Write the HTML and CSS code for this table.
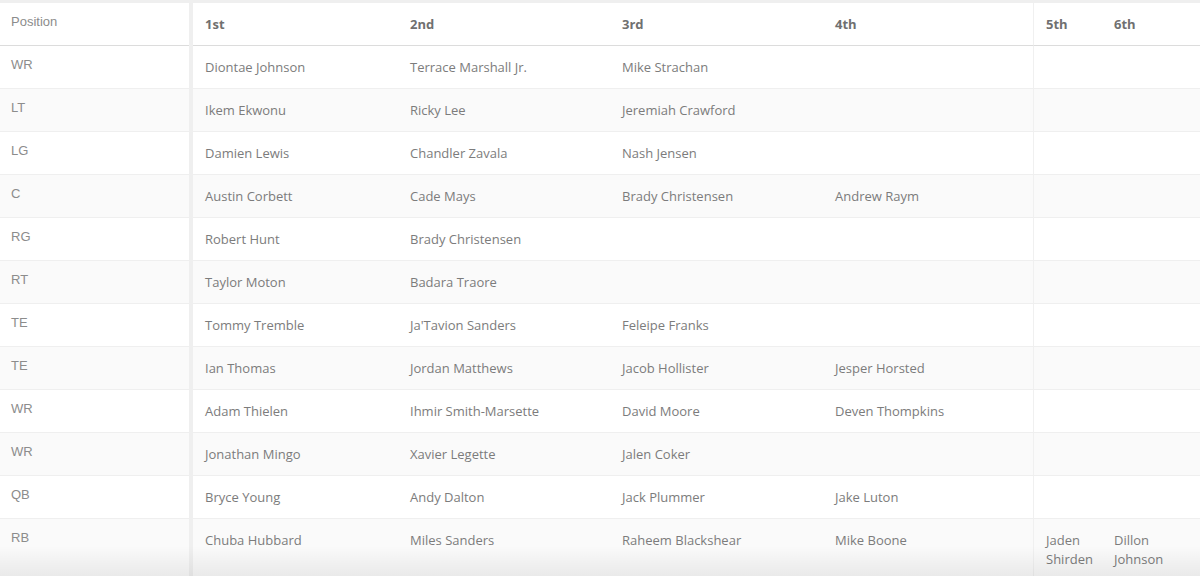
FILE: index.html
```html
<!DOCTYPE html>
<html>
<head>
<meta charset="utf-8">
<link rel="stylesheet" href="styles.css">
</head>
<body>
<div class="depth">
  <div class="row head">
    <div class="pos">Position</div><div class="sep"></div>
    <div class="c">1st</div><div class="c">2nd</div><div class="c">3rd</div><div class="c">4th</div><div class="c c5">5th</div><div class="c">6th</div>
  </div>
  <div class="row">
    <div class="pos">WR</div><div class="sep"></div>
    <div class="c">Diontae Johnson</div><div class="c">Terrace Marshall Jr.</div><div class="c">Mike Strachan</div><div class="c"></div><div class="c c5"></div><div class="c"></div>
  </div>
  <div class="row alt">
    <div class="pos">LT</div><div class="sep"></div>
    <div class="c">Ikem Ekwonu</div><div class="c">Ricky Lee</div><div class="c">Jeremiah Crawford</div><div class="c"></div><div class="c c5"></div><div class="c"></div>
  </div>
  <div class="row">
    <div class="pos">LG</div><div class="sep"></div>
    <div class="c">Damien Lewis</div><div class="c">Chandler Zavala</div><div class="c">Nash Jensen</div><div class="c"></div><div class="c c5"></div><div class="c"></div>
  </div>
  <div class="row alt">
    <div class="pos">C</div><div class="sep"></div>
    <div class="c">Austin Corbett</div><div class="c">Cade Mays</div><div class="c">Brady Christensen</div><div class="c">Andrew Raym</div><div class="c c5"></div><div class="c"></div>
  </div>
  <div class="row">
    <div class="pos">RG</div><div class="sep"></div>
    <div class="c">Robert Hunt</div><div class="c">Brady Christensen</div><div class="c"></div><div class="c"></div><div class="c c5"></div><div class="c"></div>
  </div>
  <div class="row alt">
    <div class="pos">RT</div><div class="sep"></div>
    <div class="c">Taylor Moton</div><div class="c">Badara Traore</div><div class="c"></div><div class="c"></div><div class="c c5"></div><div class="c"></div>
  </div>
  <div class="row">
    <div class="pos">TE</div><div class="sep"></div>
    <div class="c">Tommy Tremble</div><div class="c">Ja'Tavion Sanders</div><div class="c">Feleipe Franks</div><div class="c"></div><div class="c c5"></div><div class="c"></div>
  </div>
  <div class="row alt">
    <div class="pos">TE</div><div class="sep"></div>
    <div class="c">Ian Thomas</div><div class="c">Jordan Matthews</div><div class="c">Jacob Hollister</div><div class="c">Jesper Horsted</div><div class="c c5"></div><div class="c"></div>
  </div>
  <div class="row">
    <div class="pos">WR</div><div class="sep"></div>
    <div class="c">Adam Thielen</div><div class="c">Ihmir Smith-Marsette</div><div class="c">David Moore</div><div class="c">Deven Thompkins</div><div class="c c5"></div><div class="c"></div>
  </div>
  <div class="row alt">
    <div class="pos">WR</div><div class="sep"></div>
    <div class="c">Jonathan Mingo</div><div class="c">Xavier Legette</div><div class="c">Jalen Coker</div><div class="c"></div><div class="c c5"></div><div class="c"></div>
  </div>
  <div class="row">
    <div class="pos">QB</div><div class="sep"></div>
    <div class="c">Bryce Young</div><div class="c">Andy Dalton</div><div class="c">Jack Plummer</div><div class="c">Jake Luton</div><div class="c c5"></div><div class="c"></div>
  </div>
  <div class="row alt last">
    <div class="pos">RB</div><div class="sep"></div>
    <div class="c">Chuba Hubbard</div><div class="c">Miles Sanders</div><div class="c">Raheem Blackshear</div><div class="c">Mike Boone</div><div class="c c5">Jaden Shirden</div><div class="c">Dillon Johnson</div>
  </div>
  <div class="fade"></div>
</div>
</body>
</html>
```
FILE: styles.css
```css
html, body {
  margin: 0;
  padding: 0;
  background: #ffffff;
  overflow: hidden;
}
.depth {
  position: relative;
  border-top: 3px solid #efefef;
  height: 573px;
  overflow: hidden;
}
.row {
  display: grid;
  grid-template-columns: 189px 4px 205px 212px 213px 210px 69px 98px;
  background: #ffffff;
}
.row.alt {
  background: #fafafa;
}
.pos {
  font-family: "Liberation Sans", Arial, sans-serif;
  font-size: 13px;
  line-height: 19px;
  color: #8c8c8c;
  padding: 9px 10px 14px 11px;
  min-height: 19px;
  border-bottom: 1px solid #efefef;
}
.sep {
  background: #efefef;
}
.c {
  font-family: "Open Sans", sans-serif;
  font-size: 13px;
  line-height: 19px;
  color: #7c7c7c;
  padding: 12px 12px 11px 12px;
  min-height: 19px;
  border-bottom: 1px solid #efefef;
}
.c5 {
  border-left: 1px solid #f0f0f0;
  padding-right: 4px;
}
.head .c {
  font-weight: 700;
  color: #707070;
  border-bottom: 1px solid #dcdcdc;
}
.head .pos {
  border-bottom: 1px solid #dcdcdc;
}
.last .c, .last .pos {
  padding-bottom: 12px;
}
.fade {
  position: absolute;
  left: 0;
  right: 0;
  bottom: 0;
  height: 30px;
  background: linear-gradient(to bottom, rgba(0,0,0,0), rgba(0,0,0,0.065));
  pointer-events: none;
}
```
